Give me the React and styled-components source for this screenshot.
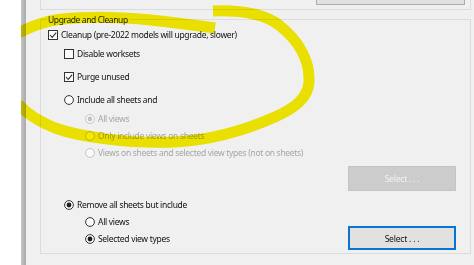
import React from 'react';
import styled, { createGlobalStyle } from 'styled-components';

const GlobalStyle = createGlobalStyle`
  html, body { margin: 0; padding: 0; background: #ffffff; }
  body { font-family: 'Noto Sans', 'Liberation Sans', sans-serif; }
`;

const Screen = styled.div`
  display: flex;
  width: 474px;
  height: 265px;
  overflow: hidden;
  background: #ffffff;
`;

const Frame = styled.div`
  position: relative;
  display: flex;
  flex: 1;
  margin-left: 21px;
  overflow: hidden;
`;

const SideBar = styled.div`
  width: 5px;
  flex-shrink: 0;
  background: linear-gradient(to right, #c6c6c6, #a9a9a9);
`;

const Panel = styled.div`
  flex: 1;
  display: flex;
  flex-direction: column;
  padding: 0 3px 0 14px;
  background: #f0f0f0;
`;

const PrevBox = styled.div`
  box-sizing: border-box;
  height: 10px;
  display: flex;
  justify-content: flex-end;
  align-items: flex-end;
  padding: 0 5px 4px 0;
  border: 1px solid #dcdcdc;
  border-top: none;
  overflow: hidden;
`;

const TopButton = styled.div`
  flex-shrink: 0;
  width: 147px;
  height: 20px;
  background: #e1e1e1;
  border: 1px solid #adadad;
`;

const GroupBox = styled.fieldset`
  margin: 4px 0 0;
  padding: 0;
  min-width: 0;
  border: 1px solid #dcdcdc;
`;

const Legend = styled.legend`
  margin-left: 6px;
  padding: 0 1px;
  font-size: 8.5px;
  line-height: 11px;
  letter-spacing: -0.4px;
  color: #262626;
`;

const Content = styled.div`
  display: flex;
  flex-direction: column;
  padding-left: 7px;
`;

const Option = styled.div`
  display: flex;
  align-items: center;
  gap: 3px;
  height: 10px;
  margin-top: ${(p) => p.$top || 0}px;
  margin-left: ${(p) => p.$indent || 0}px;
`;

const Label = styled.span`
  font-size: 8.5px;
  line-height: 10px;
  letter-spacing: -0.3px;
  white-space: nowrap;
  color: ${(p) => (p.$disabled ? '#a6a6a6' : '#111111')};
`;

const ButtonRow = styled.div`
  display: flex;
  justify-content: flex-end;
  padding-right: 14px;
  margin-top: ${(p) => p.$top || 0}px;
`;

const Button = styled.div`
  box-sizing: border-box;
  width: 108px;
  height: ${(p) => p.$height}px;
  display: flex;
  align-items: center;
  justify-content: center;
  font-size: 8.5px;
  letter-spacing: -0.2px;
  background: ${(p) => (p.$disabled ? '#cccccc' : '#e1e1e1')};
  color: ${(p) => (p.$disabled ? '#f2f2f2' : '#111111')};
  border: ${(p) => (p.$focused ? '2px solid #0a74d0' : '1px solid #c4c4c4')};
`;

const BottomSection = styled.div`
  display: flex;
  justify-content: space-between;
  align-items: flex-end;
  margin-top: 9px;
  padding: 0 14px 2.5px 0;
`;

const Column = styled.div`
  display: flex;
  flex-direction: column;
  padding-bottom: 6.5px;
`;

const Box = styled.svg`
  flex-shrink: 0;
  display: block;
`;

const Highlight = styled.svg`
  position: absolute;
  left: 0;
  top: 0;
  pointer-events: none;
  mix-blend-mode: multiply;
`;

function Checkbox({ checked }) {
  return (
    <Box width="10" height="10" viewBox="0 0 10 10">
      <rect x="0.5" y="0.5" width="9" height="9" fill="#fbfbfb" stroke="#333333" />
      {checked && (
        <polyline points="2,5 4.2,7.4 8.2,2.6" fill="none" stroke="#333333" strokeWidth="1.1" />
      )}
    </Box>
  );
}

function Radio({ checked, disabled }) {
  const tone = disabled ? '#c3c3c3' : '#333333';
  return (
    <Box width="10" height="10" viewBox="0 0 10 10">
      <circle cx="5" cy="5" r="4.4" fill="#fbfbfb" stroke={tone} />
      {checked && <circle cx="5" cy="5" r="2.4" fill={disabled ? '#c3c3c3' : '#1e1e1e'} />}
    </Box>
  );
}

export default function App() {
  return (
    <>
      <GlobalStyle />
      <Screen>
        <Frame>
          <SideBar />
          <Panel>
            <PrevBox>
              <TopButton />
            </PrevBox>
            <GroupBox>
              <Legend>Upgrade and Cleanup</Legend>
              <Content>
                <Option $top={5}>
                  <Checkbox checked />
                  <Label>Cleanup (pre-2022 models will upgrade, slower)</Label>
                </Option>
                <Option $top={9} $indent={16}>
                  <Checkbox />
                  <Label>Disable worksets</Label>
                </Option>
                <Option $top={13} $indent={16}>
                  <Checkbox checked />
                  <Label>Purge unused</Label>
                </Option>
                <Option $top={12.5} $indent={16}>
                  <Radio />
                  <Label>Include all sheets and</Label>
                </Option>
                <Option $top={9} $indent={37}>
                  <Radio checked disabled />
                  <Label $disabled>All views</Label>
                </Option>
                <Option $top={7} $indent={37}>
                  <Radio disabled />
                  <Label $disabled>Only include views on sheets</Label>
                </Option>
                <Option $top={7.5} $indent={37}>
                  <Radio disabled />
                  <Label $disabled>Views on sheets and selected view types (not on sheets)</Label>
                </Option>
                <ButtonRow $top={8}>
                  <Button $disabled $height={25}>Select . . .</Button>
                </ButtonRow>
                <BottomSection>
                  <Column>
                    <Option $indent={16}>
                      <Radio checked />
                      <Label>Remove all sheets but include</Label>
                    </Option>
                    <Option $top={6.5} $indent={37}>
                      <Radio />
                      <Label>All views</Label>
                    </Option>
                    <Option $top={7} $indent={37}>
                      <Radio checked />
                      <Label>Selected view types</Label>
                    </Option>
                  </Column>
                  <Button $focused $height={24}>Select . . .</Button>
                </BottomSection>
              </Content>
            </GroupBox>
          </Panel>
          <Highlight width="453" height="265" viewBox="21 0 453 265">
            <path
              d="M18,33 C30,27 42,22 58,19.5 C90,16 130,17 160,21 C185,24 200,26 215,28"
              fill="none"
              stroke="#f8ed00"
              strokeWidth="11"
            />
            <path
              d="M213,11 C240,10 264,14 279,25 C298,40 310,60 309,82 C308,98 295,108 275,117 C250,128 215,140 175,142 C130,144 80,137 55,128 C40,122 28,115 18,104"
              fill="none"
              stroke="#f8ed00"
              strokeWidth="11"
            />
          </Highlight>
        </Frame>
      </Screen>
    </>
  );
}
